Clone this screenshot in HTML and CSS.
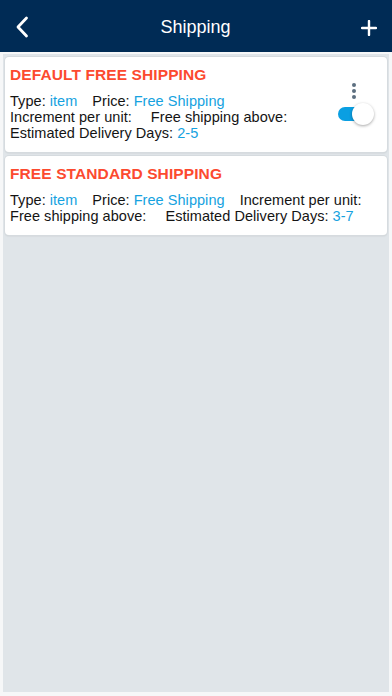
FILE: index.html
```html
<!DOCTYPE html>
<html lang="en">
<head>
<meta charset="utf-8">
<title>Shipping</title>
<link rel="stylesheet" href="styles.css">
</head>
<body>
<header class="topbar">
  <button class="icon-btn back" aria-label="Back">
    <svg width="14" height="22" viewBox="0 0 14 22"><path d="M11.5 2 L3 11 L11.5 20" fill="none" stroke="#fff" stroke-width="2.8" stroke-linecap="round" stroke-linejoin="round"/></svg>
  </button>
  <h1 class="title">Shipping</h1>
  <button class="icon-btn add" aria-label="Add">
    <svg width="16" height="16" viewBox="0 0 16 16"><path d="M8 1 V15 M1 8 H15" fill="none" stroke="#fff" stroke-width="2.4" stroke-linecap="round"/></svg>
  </button>
</header>
<main class="panel">
  <section class="card">
    <div class="card-body">
      <h2 class="card-title">DEFAULT FREE SHIPPING</h2>
      <div class="details">
        <div class="item"><span class="label">Type:</span><span class="value">item</span></div>
        <div class="item"><span class="label">Price:</span><span class="value">Free Shipping</span></div>
        <div class="item"><span class="label">Increment per unit:</span><span class="value"></span></div>
        <div class="item"><span class="label">Free shipping above:</span><span class="value"></span></div>
        <div class="item"><span class="label">Estimated Delivery Days:</span><span class="value">2-5</span></div>
      </div>
    </div>
    <div class="actions">
      <div class="more"><i></i><i></i><i></i></div>
      <div class="toggle on"><span class="knob"></span></div>
    </div>
  </section>
  <section class="card">
    <div class="card-body">
      <h2 class="card-title">FREE STANDARD SHIPPING</h2>
      <div class="details">
        <div class="item"><span class="label">Type:</span><span class="value">item</span></div>
        <div class="item"><span class="label">Price:</span><span class="value">Free Shipping</span></div>
        <div class="item"><span class="label">Increment per unit:</span><span class="value"></span></div>
        <div class="item"><span class="label">Free shipping above:</span><span class="value"></span></div>
        <div class="item"><span class="label">Estimated Delivery Days:</span><span class="value">3-7</span></div>
      </div>
    </div>
  </section>
</main>
</body>
</html>
```
FILE: styles.css
```css
* { box-sizing: border-box; }
html, body { height: 100%; }
body {
  margin: 0;
  background: #f6f7f8;
  font-family: "Liberation Sans", Arial, sans-serif;
  color: #141414;
  display: flex;
  flex-direction: column;
}
.topbar {
  height: 52px;
  flex: none;
  background: #002b55;
  display: flex;
  align-items: center;
  justify-content: space-between;
  padding: 3px 14px 0 14px;
}
.icon-btn {
  background: none;
  border: 0;
  padding: 0;
  width: 16px;
  height: 24px;
  display: flex;
  align-items: center;
  justify-content: center;
}
.back { margin-top: -1px; }
.add { margin-right: 1px; margin-top: 0; }
.title {
  margin: 0;
  color: #fff;
  font-size: 18px;
  font-weight: normal;
}
.panel {
  flex: 1;
  margin: 2px 3px 4px 3px;
  background: #e0e5e9;
  padding: 3px 2px;
  display: flex;
  flex-direction: column;
  gap: 4px;
}
.card {
  background: #fff;
  border-radius: 4px;
  box-shadow: 0 0 0 1px #d6dbdf, 0 1px 2px rgba(0,0,0,0.12);
  padding: 8px 5px 11px 5px;
  display: flex;
}
.card-body { flex: 1; min-width: 0; }
.card-title {
  margin: 0 0 8px 0;
  font-size: 15.5px;
  line-height: 20px;
  font-weight: bold;
  color: #fc4a2f;
  letter-spacing: 0.1px;
}
.details {
  display: flex;
  flex-wrap: wrap;
  column-gap: 15px;
  font-size: 14.5px;
  line-height: 16px;
  letter-spacing: 0.05px;
}
.label { margin-right: 4px; }
.value { color: #16a2e0; }
.actions {
  width: 52px;
  flex: none;
  display: flex;
  flex-direction: column;
  align-items: center;
  padding-top: 18px;
  padding-right: 4px;
  gap: 8px;
}
.more {
  display: flex;
  flex-direction: column;
  gap: 2px;
  align-items: center;
}
.more i {
  display: block;
  width: 4px;
  height: 4px;
  border-radius: 50%;
  background: #5d6f80;
}
.toggle {
  position: relative;
  width: 34px;
  height: 14px;
  border-radius: 7px;
  background: #0a9fe2;
  margin-left: 2px;
}
.knob {
  position: absolute;
  right: -2px;
  top: -4px;
  width: 22px;
  height: 22px;
  border-radius: 50%;
  background: #fff;
  box-shadow: 0 1px 3px rgba(0,0,0,0.35);
}
```
